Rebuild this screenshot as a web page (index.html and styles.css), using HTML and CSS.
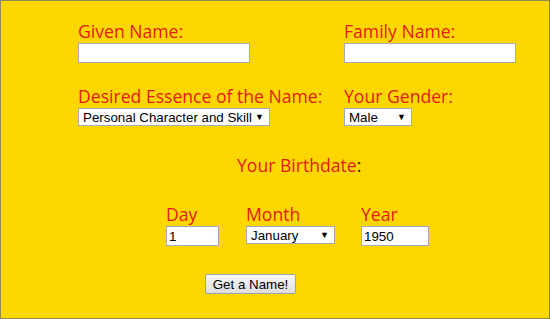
FILE: index.html
```html
<!DOCTYPE html>
<html lang="en">
<head>
    <meta charset="UTF-8" />
    <title>Get a Name</title>
    <link rel="stylesheet" href="styles.css">
</head>
<body>
    <form class="name-form">
        <div class="form-row">
            <div class="field wide">
                <label class="field-label">Given Name:</label>
                <input type="text" class="text-input name-input" />
            </div>
            <div class="field">
                <label class="field-label">Family Name:</label>
                <input type="text" class="text-input name-input" />
            </div>
        </div>
        <div class="form-row second">
            <div class="field wide">
                <label class="field-label">Desired Essence of the Name:</label>
                <span class="select-wrap essence">
                    <select class="pick">
                        <option>Personal Character and Skill</option>
                    </select>
                </span>
            </div>
            <div class="field">
                <label class="field-label">Your Gender:</label>
                <span class="select-wrap gender">
                    <select class="pick">
                        <option>Male</option>
                    </select>
                </span>
            </div>
        </div>
        <div class="birth-title"><span class="field-label">Your Birthdate</span>:</div>
        <div class="birth-row">
            <div class="field day">
                <label class="field-label">Day</label>
                <input type="text" class="text-input day-input" value="1" />
            </div>
            <div class="field month">
                <label class="field-label">Month</label>
                <span class="select-wrap month-pick">
                    <select class="pick">
                        <option>January</option>
                    </select>
                </span>
            </div>
            <div class="field">
                <label class="field-label">Year</label>
                <input type="text" class="text-input year-input" value="1950" />
            </div>
        </div>
        <div class="submit-row">
            <button type="button" class="submit-button">Get a Name!</button>
        </div>
    </form>
</body>
</html>
```

FILE: styles.css
```css
html, body {
    height: 100%;
}
body {
    margin: 0;
    box-sizing: border-box;
    background: #ffd700;
    border: 1px solid #8c8a52;
    font-family: 'Open Sans', 'Noto Sans', sans-serif;
    color: #222;
}
.name-form {
    padding: 18px 0 0 77px;
}
.form-row {
    display: flex;
}
.form-row.second {
    margin-top: 21px;
}
.field {
    display: flex;
    flex-direction: column;
    align-items: flex-start;
}
.field.wide {
    width: 266px;
}
.field-label {
    color: #e41b17;
    font-size: 17.6px;
    line-height: 24px;
}
.text-input {
    box-sizing: border-box;
    height: 20px;
    border: 1px solid #a9a9a9;
    background: #fff;
    padding: 0 2px;
    font-family: 'Liberation Sans', Arial, sans-serif;
    font-size: 13.33px;
    color: #000;
    outline: none;
}
.name-input {
    width: 172px;
}
.select-wrap {
    position: relative;
    display: block;
}
.select-wrap::after {
    content: '\25BC';
    position: absolute;
    right: 6px;
    top: 3px;
    font-size: 9px;
    line-height: 12px;
    color: #000;
    pointer-events: none;
}
.pick {
    appearance: none;
    -webkit-appearance: none;
    display: block;
    box-sizing: border-box;
    height: 18px;
    margin: 0;
    border: 1px solid #a9a9a9;
    border-radius: 0;
    background: #fff;
    padding: 0 0 0 4px;
    font-family: 'Liberation Sans', Arial, sans-serif;
    font-size: 13.33px;
    color: #000;
}
.essence .pick {
    width: 192px;
}
.gender .pick {
    width: 68px;
}
.month-pick .pick {
    width: 89px;
}
.birth-title {
    margin: 27px 0 0 159px;
    font-size: 17.6px;
    line-height: 24px;
    color: #222;
}
.birth-row {
    display: flex;
    margin: 25px 0 0 88px;
}
.field.day {
    width: 80px;
}
.field.month {
    width: 115px;
}
.day-input {
    width: 53px;
}
.year-input {
    width: 68px;
}
.submit-row {
    margin: 28px 0 0 127px;
}
.submit-button {
    display: block;
    box-sizing: border-box;
    width: 91px;
    height: 20px;
    padding: 0;
    border: 1px solid #a0a0a0;
    border-radius: 2px;
    background: linear-gradient(#f7f7f7, #dedede);
    font-family: 'Liberation Sans', Arial, sans-serif;
    font-size: 13.33px;
    color: #000;
}
```
